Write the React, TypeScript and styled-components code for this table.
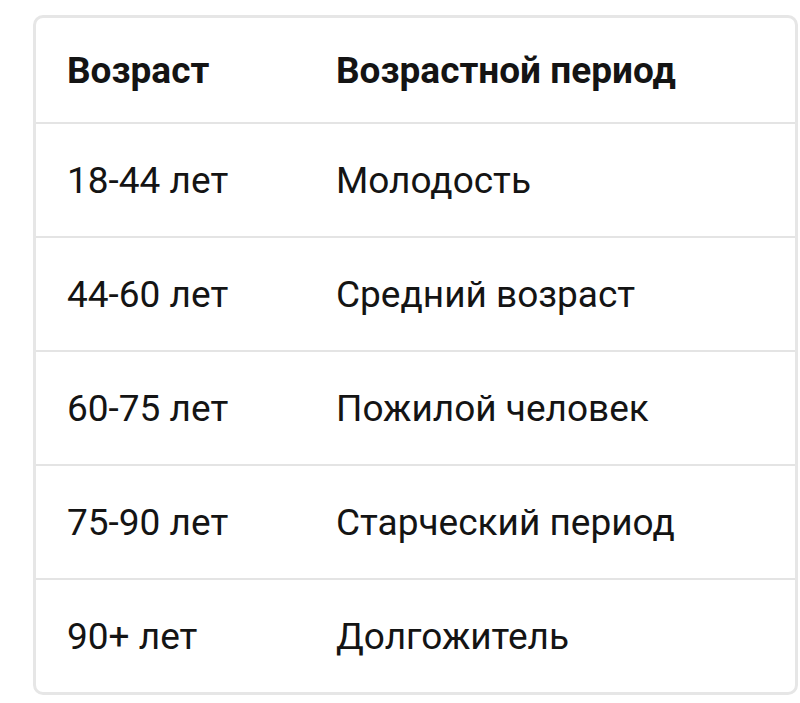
import styled, { createGlobalStyle } from 'styled-components';

const GlobalStyle = createGlobalStyle`
  body {
    margin: 0;
    background: #ffffff;
    font-family: Roboto, 'Noto Sans', sans-serif;
  }
`;

const rows = [
  { age: '18-44 лет', period: 'Молодость' },
  { age: '44-60 лет', period: 'Средний возраст' },
  { age: '60-75 лет', period: 'Пожилой человек' },
  { age: '75-90 лет', period: 'Старческий период' },
  { age: '90+ лет', period: 'Долгожитель' },
];

function App() {
  return (
    <>
      <GlobalStyle />
      <Page>
        <Table>
          <Row $header>
            <Cell $bold>Возраст</Cell>
            <Cell $bold>Возрастной период</Cell>
          </Row>
          {rows.map((r) => (
            <Row key={r.age}>
              <Cell>{r.age}</Cell>
              <Cell>{r.period}</Cell>
            </Row>
          ))}
        </Table>
      </Page>
    </>
  );
}

const Page = styled.div`
  padding: 15px 0 0 33px;
`;

const Table = styled.div`
  width: 765px;
  box-sizing: border-box;
  border: 3px solid #e6e6e6;
  border-radius: 10px;
  overflow: hidden;
`;

const Row = styled.div<{ $header?: boolean }>`
  display: grid;
  grid-template-columns: 269px 1fr;
  align-items: center;
  height: ${(p) => (p.$header ? '104px' : '112px')};
  border-top: ${(p) => (p.$header ? 'none' : '2px solid #e4e4e4')};
`;

const Cell = styled.div<{ $bold?: boolean }>`
  padding-left: 31px;
  font-size: 37px;
  font-weight: ${(p) => (p.$bold ? 700 : 400)};
  color: #141414;
  white-space: nowrap;
`;

export default App;
